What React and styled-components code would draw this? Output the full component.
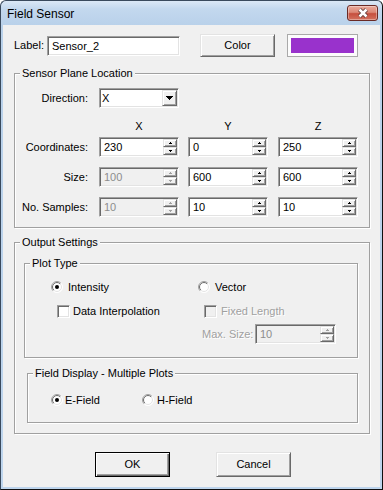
import React, { useId } from "react";
import styled, { createGlobalStyle, css } from "styled-components";

const GlobalStyle = createGlobalStyle`
  html, body { margin: 0; padding: 0; }
  body {
    width: 383px; height: 490px; overflow: hidden; background: #ffffff;
    font-family: "Liberation Sans", Arial, sans-serif; font-size: 11px; color: #000;
  }
  * { box-sizing: border-box; }
`;

const sunken = css`
  border: 1px solid;
  border-color: #a0a0a0 #ffffff #ffffff #a0a0a0;
  box-shadow: inset 1px 1px 0 #696969, inset -1px -1px 0 #e3e3e3;
  padding: 1px;
`;

const raised = css`
  border: 1px solid;
  border-color: #e3e3e3 #696969 #696969 #e3e3e3;
  box-shadow: inset 1px 1px 0 #ffffff, inset -1px -1px 0 #a0a0a0;
  background: #f0f0f0;
`;

const Window = styled.div`
  width: 383px;
  height: 490px;
  display: flex;
  flex-direction: column;
  border: 1px solid #3a4a5d;
  border-right-color: #101010;
  border-bottom-color: #101010;
  border-radius: 6px 6px 0 0;
  padding: 0 2px 2px 2px;
  background: linear-gradient(180deg, #dbe8f6 0px, #c3d8ee 8px, #b9d1ea 24px, #bed5ed 100%);
`;

const TitleBar = styled.div`
  height: 24px;
  flex: none;
  display: flex;
  align-items: center;
  justify-content: space-between;
  padding: 0 2px 0 4px;
`;

const TitleText = styled.span`
  font-size: 12px;
  color: #000;
  margin-top: 1px;
`;

const CloseButton = styled.div`
  width: 31px;
  height: 16px;
  border: 1px solid #6a2a25;
  border-radius: 3px;
  background: linear-gradient(180deg, #eaab9d 0%, #dc8877 45%, #c64f3e 55%, #d3725f 100%);
  box-shadow: inset 0 0 0 1px rgba(255, 255, 255, 0.35);
  display: flex;
  align-items: center;
  justify-content: center;
`;

const Client = styled.div`
  flex: 1;
  background: #f0f0f0;
  display: flex;
  flex-direction: column;
  padding: 9px 0 0 11px;
`;

const TopRow = styled.div`
  display: flex;
  align-items: center;
  height: 23px;
`;

const FieldLabel = styled.span`
  width: 33px;
  line-height: 13px;
`;

const TextBox = styled.div`
  ${sunken};
  width: ${(p) => p.$w}px;
  height: 20px;
  background: #ffffff;
  padding-left: 4px;
  line-height: 16px;
`;

const PushButton = styled.div`
  ${raised};
  width: 75px;
  height: ${(p) => p.$h || 25}px;
  margin-left: ${(p) => p.$ml || 0}px;
  display: flex;
  align-items: center;
  justify-content: center;
  line-height: 13px;
  ${(p) =>
    p.$default &&
    css`
      border: 1px solid #000;
      box-shadow: inset 1px 1px 0 #ffffff, inset -1px -1px 0 #696969, inset -2px -2px 0 #a0a0a0;
    `}
`;

const Swatch = styled.div`
  width: 71px;
  height: 23px;
  margin-left: 12px;
  border: 1px solid #a9a9a9;
  background: #fcfcfc;
  padding: 3px;
`;

const SwatchFill = styled.div`
  width: 100%;
  height: 100%;
  background: ${(p) => p.$color};
`;

const Group = styled.fieldset`
  width: ${(p) => p.$w}px;
  margin: ${(p) => p.$mt || 0}px 0 0 ${(p) => p.$ml || 0}px;
  padding: 0;
  min-width: 0;
  border: 1px solid #a0a0a0;
  box-shadow: inset 1px 1px 0 #ffffff, 1px 1px 0 #ffffff;
`;

const Caption = styled.legend`
  margin-left: 5px;
  padding: 0 2px;
  font-size: 11px;
  line-height: 13px;
  background: #f0f0f0;
  color: #000;
`;

const GroupBody = styled.div`
  padding: ${(p) => p.$pt || 0}px 0 ${(p) => p.$pb || 0}px ${(p) => p.$pl || 0}px;
  display: flex;
  flex-direction: column;
`;

const LocRow = styled.div`
  display: grid;
  grid-template-columns: 84px 89px 90px 80px;
  align-items: center;
  margin-top: ${(p) => p.$mt || 0}px;
`;

const RowLabel = styled.span`
  text-align: right;
  padding-right: 11px;
  line-height: 13px;
`;

const AxisHead = styled.span`
  width: 80px;
  text-align: center;
  line-height: 13px;
`;

const ComboFrame = styled.div`
  ${sunken};
  width: 80px;
  height: 20px;
  background: #ffffff;
  display: flex;
`;

const ComboValue = styled.div`
  flex: 1;
  padding-left: 1px;
  line-height: 16px;
`;

const ComboButton = styled.div`
  ${raised};
  width: 15px;
  height: 16px;
  display: flex;
  align-items: center;
  justify-content: center;
`;

const SpinFrame = styled.div`
  ${sunken};
  width: ${(p) => p.$w || 80}px;
  height: 20px;
  display: flex;
  background: ${(p) => (p.$disabled ? "#f0f0f0" : "#ffffff")};
`;

const SpinValue = styled.div`
  flex: 1;
  padding-left: 3px;
  line-height: 16px;
  color: ${(p) => (p.$disabled ? "#8d8d8d" : "#000")};
`;

const SpinButtons = styled.div`
  width: 14px;
  flex: none;
  display: flex;
  flex-direction: column;
`;

const SpinBtn = styled.div`
  ${raised};
  height: 8px;
  display: flex;
  align-items: center;
  justify-content: center;
`;

const OptionRow = styled.div`
  display: grid;
  grid-template-columns: ${(p) => p.$cols};
  align-items: center;
  margin-top: ${(p) => p.$mt || 0}px;
`;

const Option = styled.div`
  display: flex;
  align-items: center;
  height: 16px;
  gap: ${(p) => p.$gap}px;
  margin-left: ${(p) => p.$ml || 0}px;
  line-height: 13px;
  color: ${(p) => (p.$disabled ? "#a0a0a0" : "#000")};
  text-shadow: ${(p) => (p.$disabled ? "1px 1px 0 #ffffff" : "none")};
`;

const CheckBox = styled.span`
  ${sunken};
  width: 13px;
  height: 13px;
  flex: none;
  background: ${(p) => (p.$disabled ? "#f0f0f0" : "#ffffff")};
`;

const MaxSize = styled.div`
  display: flex;
  align-items: center;
  margin-left: 4px;
`;

const MaxLabel = styled.span`
  width: 53px;
  line-height: 13px;
  color: #a0a0a0;
  text-shadow: 1px 1px 0 #ffffff;
`;

const ButtonRow = styled.div`
  display: flex;
  gap: 46px;
  margin: 18px 0 0 81px;
`;

function PixelArrow({ rows, color }) {
  const w = Math.max(...rows);
  const h = rows.length;
  return (
    <svg width={w} height={h} viewBox={`0 0 ${w} ${h}`} shapeRendering="crispEdges">
      {rows.map((rw, i) => (
        <rect key={i} x={(w - rw) / 2} y={i} width={rw} height={1} fill={color} />
      ))}
    </svg>
  );
}

function CloseX() {
  const d = "M3.5 1.5 L10.5 8.5 M10.5 1.5 L3.5 8.5";
  return (
    <svg width="14" height="10" viewBox="0 0 14 10">
      <path d={d} stroke="#5a3431" strokeWidth="4.2" strokeLinecap="butt" fill="none" />
      <path d={d} stroke="#ffffff" strokeWidth="2.6" strokeLinecap="butt" fill="none" />
    </svg>
  );
}

function RadioGlyph({ checked }) {
  const id = useId().replace(/:/g, "");
  return (
    <svg width="12" height="12" viewBox="0 0 12 12" style={{ flex: "none" }}>
      <defs>
        <linearGradient id={`o${id}`} x1="0" y1="0" x2="1" y2="1">
          <stop offset="0.45" stopColor="#a0a0a0" />
          <stop offset="0.55" stopColor="#ffffff" />
        </linearGradient>
        <linearGradient id={`i${id}`} x1="0" y1="0" x2="1" y2="1">
          <stop offset="0.45" stopColor="#696969" />
          <stop offset="0.55" stopColor="#e3e3e3" />
        </linearGradient>
      </defs>
      <circle cx="6" cy="6" r="5.5" fill="#ffffff" stroke={`url(#o${id})`} strokeWidth="1" />
      <circle cx="6" cy="6" r="4.5" fill="#ffffff" stroke={`url(#i${id})`} strokeWidth="1" />
      {checked && <circle cx="6" cy="6" r="2" fill="#000" />}
    </svg>
  );
}

function Radio({ label, checked, gap, ml }) {
  return (
    <Option $gap={gap} $ml={ml}>
      <RadioGlyph checked={checked} />
      <span>{label}</span>
    </Option>
  );
}

function Check({ label, disabled, gap, ml }) {
  return (
    <Option $gap={gap} $ml={ml} $disabled={disabled}>
      <CheckBox $disabled={disabled} />
      <span>{label}</span>
    </Option>
  );
}

function SpinBox({ value, disabled, w }) {
  const c = disabled ? "#a0a0a0" : "#000";
  return (
    <SpinFrame $disabled={disabled} $w={w}>
      <SpinValue $disabled={disabled}>{value}</SpinValue>
      <SpinButtons>
        <SpinBtn>
          <PixelArrow rows={[1, 3]} color={c} />
        </SpinBtn>
        <SpinBtn>
          <PixelArrow rows={[3, 1]} color={c} />
        </SpinBtn>
      </SpinButtons>
    </SpinFrame>
  );
}

const rows = [
  { label: "Coordinates:", values: [["230"], ["0"], ["250"]], mt: 4 },
  { label: "Size:", values: [["100", true], ["600"], ["600"]], mt: 10 },
  { label: "No. Samples:", values: [["10", true], ["10"], ["10"]], mt: 10 },
];

export default function App() {
  return (
    <>
      <GlobalStyle />
      <Window>
        <TitleBar>
          <TitleText>Field Sensor</TitleText>
          <CloseButton>
            <CloseX />
          </CloseButton>
        </TitleBar>
        <Client>
          <TopRow>
            <FieldLabel>Label:</FieldLabel>
            <TextBox $w={133}>Sensor_2</TextBox>
            <PushButton $h={23} $ml={20}>
              Color
            </PushButton>
            <Swatch>
              <SwatchFill $color="#9932cc" />
            </Swatch>
          </TopRow>

          <Group $w={356} $mt={10}>
            <Caption>Sensor Plane Location</Caption>
            <GroupBody $pt={8} $pb={10}>
              <LocRow>
                <RowLabel>Direction:</RowLabel>
                <ComboFrame>
                  <ComboValue>X</ComboValue>
                  <ComboButton>
                    <PixelArrow rows={[7, 5, 3, 1]} color="#000" />
                  </ComboButton>
                </ComboFrame>
              </LocRow>
              <LocRow $mt={12}>
                <span />
                <AxisHead>X</AxisHead>
                <AxisHead>Y</AxisHead>
                <AxisHead>Z</AxisHead>
              </LocRow>
              {rows.map((r) => (
                <LocRow key={r.label} $mt={r.mt}>
                  <RowLabel>{r.label}</RowLabel>
                  {r.values.map(([v, dis], i) => (
                    <SpinBox key={i} value={v} disabled={dis} />
                  ))}
                </LocRow>
              ))}
            </GroupBody>
          </Group>

          <Group $w={356} $mt={8}>
            <Caption>Output Settings</Caption>
            <GroupBody $pt={8} $pb={10} $pl={9}>
              <Group $w={334}>
                <Caption>Plot Type</Caption>
                <GroupBody $pt={9} $pb={13} $pl={26}>
                  <OptionRow $cols="147px auto">
                    <Radio label="Intensity" checked gap={5} />
                    <Radio label="Vector" gap={5} />
                  </OptionRow>
                  <OptionRow $cols="147px auto" $mt={8}>
                    <Check label="Data Interpolation" gap={3} ml={6} />
                    <Check label="Fixed Length" disabled gap={4} ml={6} />
                  </OptionRow>
                  <OptionRow $cols="147px auto" $mt={5}>
                    <span />
                    <MaxSize>
                      <MaxLabel>Max. Size:</MaxLabel>
                      <SpinBox value="10" disabled w={81} />
                    </MaxSize>
                  </OptionRow>
                </GroupBody>
              </Group>
              <Group $w={331} $mt={9} $ml={3}>
                <Caption>Field Display - Multiple Plots</Caption>
                <GroupBody $pt={12} $pb={14} $pl={23}>
                  <OptionRow $cols="91px auto">
                    <Radio label="E-Field" checked gap={2} />
                    <Radio label="H-Field" gap={3} />
                  </OptionRow>
                </GroupBody>
              </Group>
            </GroupBody>
          </Group>

          <ButtonRow>
            <PushButton $default>OK</PushButton>
            <PushButton>Cancel</PushButton>
          </ButtonRow>
        </Client>
      </Window>
    </>
  );
}
